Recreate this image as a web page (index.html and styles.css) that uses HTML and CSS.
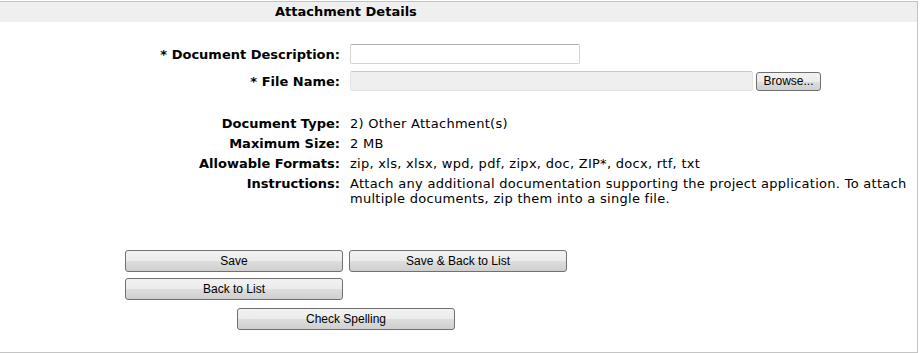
FILE: index.html
```html
<!DOCTYPE html>
<html lang="en">
<head>
  <meta charset="UTF-8" />
  <title>Attachment Details</title>
  <link rel="stylesheet" href="styles.css">
</head>
<body>
  <div class="panel">
    <div class="panel-head">Attachment Details</div>

    <div class="form-grid">
      <label class="field-label" for="docDesc">* Document Description:</label>
      <div><input class="text-input" id="docDesc" type="text"></div>

      <label class="field-label" for="fileName">* File Name:</label>
      <div class="file-field">
        <span class="file-box" id="fileName"></span>
        <button class="browse-btn" type="button">Browse...</button>
      </div>
    </div>

    <div class="info-grid">
      <div class="info-label">Document Type:</div>
      <div class="info-value">2) Other Attachment(s)</div>

      <div class="info-label">Maximum Size:</div>
      <div class="info-value">2 MB</div>

      <div class="info-label">Allowable Formats:</div>
      <div class="info-value">zip, xls, xlsx, wpd, pdf, zipx, doc, ZIP*, docx, rtf, txt</div>

      <div class="info-label">Instructions:</div>
      <div class="info-value">Attach any additional documentation supporting the project application. To attach multiple documents, zip them into a single file.</div>
    </div>

    <div class="actions">
      <div class="action-row">
        <button class="action-btn" type="button">Save</button>
        <button class="action-btn" type="button">Save &amp; Back to List</button>
      </div>
      <div class="action-row">
        <button class="action-btn" type="button">Back to List</button>
      </div>
      <div class="action-row centered">
        <button class="action-btn" type="button">Check Spelling</button>
      </div>
    </div>
  </div>
</body>
</html>
```

FILE: styles.css
```css
* {
  box-sizing: border-box;
}

body {
  margin: 0;
  padding-top: 1px;
  font-family: Verdana, "DejaVu Sans", sans-serif;
  font-size: 13px;
  color: #000;
  background: #fff;
}

.panel {
  width: 918px;
  height: 352px;
  border-top: 1px solid #c4c4c4;
  border-right: 1px solid #c4c4c4;
  border-bottom: 1px solid #c4c4c4;
}

.panel-head {
  height: 20px;
  line-height: 20px;
  background: #efefef;
  font-weight: bold;
  padding-left: 275px;
}

.form-grid {
  display: grid;
  grid-template-columns: 340px 1fr;
  column-gap: 10px;
  row-gap: 7px;
  align-items: center;
  margin-top: 22px;
}

.field-label {
  text-align: right;
  font-weight: bold;
}

.text-input {
  display: block;
  width: 230px;
  height: 20px;
  margin: 0;
  border: 1px solid #d4d4d4;
  border-top-color: #b0b0b4;
  border-radius: 2px;
  font: inherit;
}

.file-field {
  display: flex;
  align-items: center;
  gap: 3px;
}

.file-box {
  display: block;
  width: 403px;
  height: 20px;
  background: #efefef;
  border: 1px solid #e2e2e2;
  border-top-color: #c8c8cc;
  border-radius: 2px;
}

.browse-btn,
.action-btn {
  font-family: "Liberation Sans", Arial, sans-serif;
  font-size: 12px;
  color: #000;
  background: linear-gradient(#f2f2f2 0%, #ebebeb 50%, #dddddd 51%, #cfcfcf 100%);
  border: 1px solid #707070;
  border-radius: 3px;
  padding: 0;
  cursor: pointer;
}

.browse-btn {
  width: 65px;
  height: 19px;
}

.info-grid {
  display: grid;
  grid-template-columns: 340px 566px;
  column-gap: 10px;
  row-gap: 5px;
  line-height: 15px;
  margin-top: 25px;
}

.info-label {
  text-align: right;
  font-weight: bold;
}

.info-value {
  letter-spacing: 0.28px;
}

.actions {
  margin-top: 44px;
  padding-left: 125px;
  width: 567px;
}

.action-row {
  display: flex;
  gap: 6px;
  margin-bottom: 6px;
}

.action-row.centered {
  justify-content: center;
  margin-top: 8px;
}

.action-btn {
  width: 218px;
  height: 22px;
}
```
